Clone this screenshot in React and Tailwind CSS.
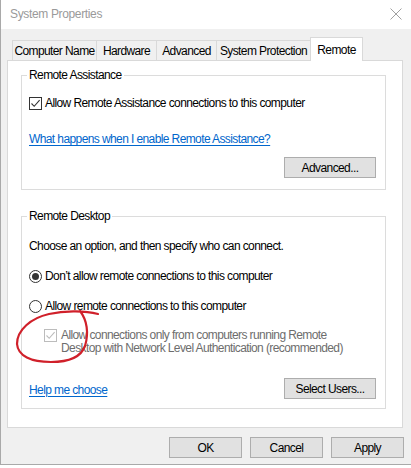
import React from "react";

function WinButton({ children, className = "" }) {
  return (
    <button
      className={
        "h-[21px] bg-[#e1e1e1] border border-[#adadad] text-black text-[12px] leading-none flex items-center justify-center " +
        className
      }
    >
      {children}
    </button>
  );
}

function CheckBox({ disabled }) {
  const c = disabled ? "#bcbcbc" : "#333333";
  return (
    <span
      className={
        "w-[13px] h-[13px] shrink-0 bg-white border flex items-center justify-center " +
        (disabled ? "border-[#bcbcbc]" : "border-[#333333]")
      }
    >
      <svg width="11" height="11" viewBox="0 0 11 11">
        <path d="M1.5 5.5 L4.2 8.3 L9.6 2.2" fill="none" stroke={c} strokeWidth="1.1" />
      </svg>
    </span>
  );
}

function Radio({ checked }) {
  return (
    <span className="w-[13px] h-[13px] shrink-0 rounded-full bg-white border border-[#333333] flex items-center justify-center">
      {checked && <span className="w-[7px] h-[7px] rounded-full bg-[#333333]" />}
    </span>
  );
}

function Tab({ label, width, selected }) {
  if (selected) {
    return (
      <div
        className={
          "h-[24px] -mb-px z-10 bg-white border border-b-0 border-[#d9d9d9] flex items-start justify-center pt-[3px] " +
          width
        }
      >
        {label}
      </div>
    );
  }
  return (
    <div
      className={
        "h-[20px] bg-[#f0f0f0] border border-b-0 border-r-0 border-[#d9d9d9] flex items-center justify-center " +
        width
      }
    >
      {label}
    </div>
  );
}

export default function App() {
  return (
    <div className="w-[411px] h-[468px] bg-white font-['Liberation_Sans',Arial,sans-serif] text-[12px] tracking-[-0.6px] text-black">
      <div className="w-[411px] h-[465px] border-l border-b border-[#a9a9a9] bg-[#f0f0f0] flex flex-col relative">
        {/* title bar */}
        <div className="h-[29px] bg-white flex items-center justify-between pl-[9px] pr-[9px] shrink-0">
          <span className="text-[12px] text-[#9a9a9a] tracking-[-0.35px] -mt-[1px]">System Properties</span>
          <svg width="12" height="12" viewBox="0 0 12 12" className="-mt-[2px]">
            <path d="M0.5 0.5 L11.5 11.5 M11.5 0.5 L0.5 11.5" stroke="#a0a0a0" strokeWidth="1" />
          </svg>
        </div>

        {/* tabs */}
        <div className="flex items-end h-[23px] mt-[8px] ml-[11px] shrink-0">
          <Tab label="Computer Name" width="w-[84px]" />
          <Tab label="Hardware" width="w-[60px]" />
          <Tab label="Advanced" width="w-[60px]" />
          <div className="h-[20px] w-[95px] bg-[#f0f0f0] border border-b-0 border-[#d9d9d9] flex items-center justify-center">
            System Protection
          </div>
          <Tab label="Remote" width="w-[53px] -ml-px" selected />
        </div>

        {/* panel */}
        <div className="ml-[6px] w-[396px] h-[368px] bg-white border border-[#d9d9d9] pl-[13px] flex flex-col shrink-0">
          <fieldset className="mt-[7px] w-[365px] border border-[#dcdcdc] pl-[7px] pr-[9px] pb-[11px] flex flex-col">
            <legend className="-ml-[2px] px-[2px] leading-[14px]">Remote Assistance</legend>
            <div className="mt-[14px] h-[14px] flex items-center gap-[3px]">
              <CheckBox />
              <span>Allow Remote Assistance connections to this computer</span>
            </div>
            <div className="mt-[22px] h-[14px] leading-[14px]">
              <span className="text-[#0066cc] underline underline-offset-[2px]">
                What happens when I enable Remote Assistance?
              </span>
            </div>
            <div className="mt-[11px] flex justify-end">
              <WinButton className="w-[92px]">Advanced...</WinButton>
            </div>
          </fieldset>

          <fieldset className="mt-[19px] w-[365px] border border-[#dcdcdc] pl-[7px] pr-[9px] pb-[9px] flex flex-col">
            <legend className="-ml-[2px] px-[2px] leading-[14px]">Remote Desktop</legend>
            <div className="mt-[16px] h-[14px] leading-[14px]">
              Choose an option, and then specify who can connect.
            </div>
            <div className="mt-[16px] h-[14px] flex items-center gap-[3px]">
              <Radio checked />
              <span>Don’t allow remote connections to this computer</span>
            </div>
            <div className="mt-[16px] h-[14px] flex items-center gap-[3px]">
              <Radio />
              <span>Allow remote connections to this computer</span>
            </div>
            <div className="mt-[16px] ml-[15px] flex items-start gap-[4px]">
              <div className="pt-[0px]">
                <CheckBox disabled />
              </div>
              <div className="leading-[13px] text-[#6d6d6d]">
                Allow connections only from computers running Remote
                <br />
                Desktop with Network Level Authentication (recommended)
              </div>
            </div>
            <div className="mt-[23px] flex items-center justify-between">
              <span className="text-[#0066cc] underline underline-offset-[2px] mt-[2px]">Help me choose</span>
              <WinButton className="w-[92px]">Select Users...</WinButton>
            </div>
          </fieldset>
        </div>

        {/* bottom buttons */}
        <div className="mt-[9px] flex justify-end gap-[8px] pr-[7px]">
          <WinButton className="w-[73px]">OK</WinButton>
          <WinButton className="w-[73px]">Cancel</WinButton>
          <WinButton className="w-[73px]">Apply</WinButton>
        </div>

        {/* red annotation circle */}
        <svg className="absolute left-0 top-0 pointer-events-none" width="411" height="468" viewBox="0 0 411 468">
          <path
            d="M97 314 C85 311, 65 310, 48 314 C30 318, 16 330, 16 344 C17 356, 30 362, 50 362 C68 362, 80 357, 84 346 C88 333, 86 320, 79 311"
            fill="none"
            stroke="#d0202a"
            strokeWidth="2.2"
            strokeLinecap="round"
          />
        </svg>
      </div>
    </div>
  );
}
